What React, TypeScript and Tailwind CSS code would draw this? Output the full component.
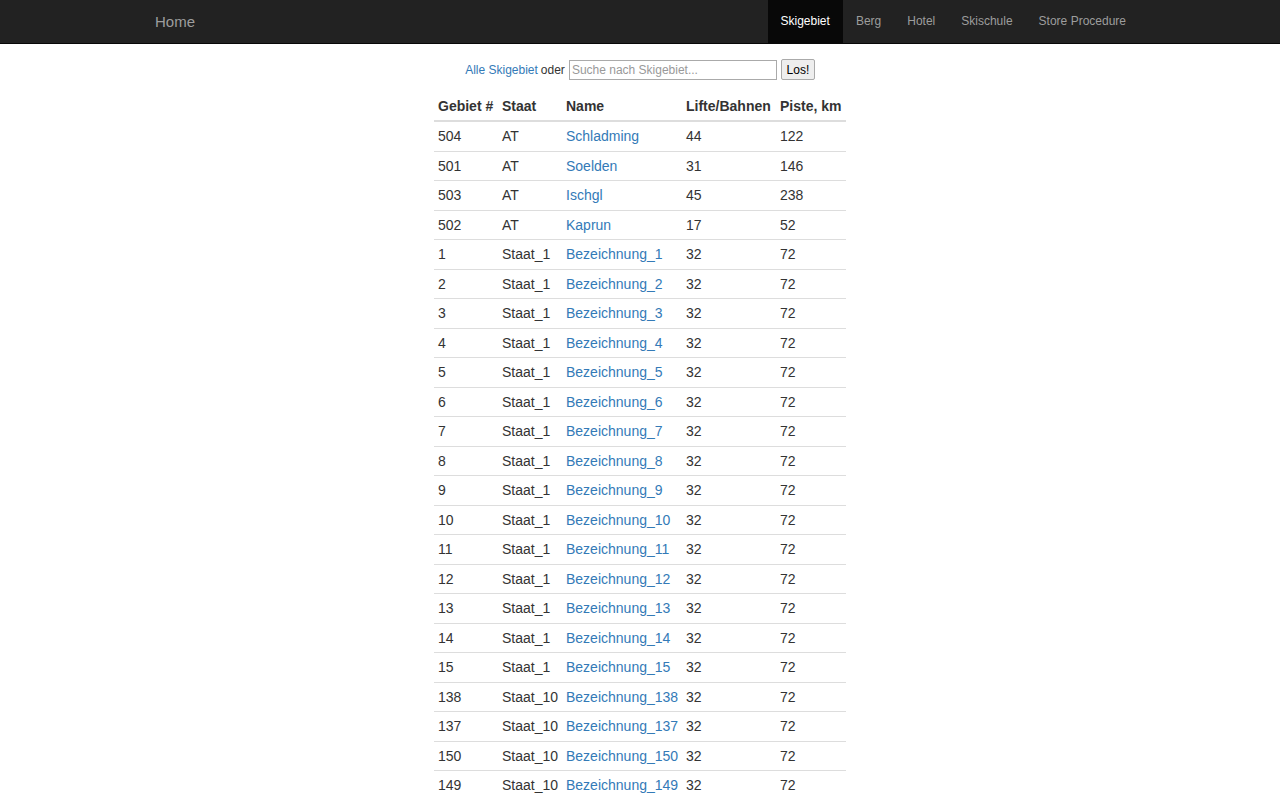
import React from "react";

type Row = { id: string; staat: string; name: string; lifte: string; piste: string };

const rows: Row[] = [
  { id: "504", staat: "AT", name: "Schladming", lifte: "44", piste: "122" },
  { id: "501", staat: "AT", name: "Soelden", lifte: "31", piste: "146" },
  { id: "503", staat: "AT", name: "Ischgl", lifte: "45", piste: "238" },
  { id: "502", staat: "AT", name: "Kaprun", lifte: "17", piste: "52" },
  ...Array.from({ length: 15 }, (_, i) => ({
    id: String(i + 1),
    staat: "Staat_1",
    name: `Bezeichnung_${i + 1}`,
    lifte: "32",
    piste: "72",
  })),
  ...["138", "137", "150", "149"].map((n) => ({
    id: n,
    staat: "Staat_10",
    name: `Bezeichnung_${n}`,
    lifte: "32",
    piste: "72",
  })),
];

const navItems = ["Skigebiet", "Berg", "Hotel", "Skischule", "Store Procedure"];

const App = () => {
  return (
    <div className="min-h-screen bg-white font-['Liberation_Sans',Arial,sans-serif] text-[14px] text-[#333]">
      <nav className="h-[44px] border-b border-[#080808] bg-[#222]">
        <div className="mx-auto flex h-[43px] w-[970px] items-center justify-between">
          <a className="mt-[1px] text-[15px] text-[#9d9d9d]">Home</a>
          <ul className="mr-[-14px] flex h-full">
            {navItems.map((item, i) => (
              <li key={item}>
                <a
                  className={
                    i === 0
                      ? "flex h-[43px] items-center bg-[#080808] px-[13px] pb-[1px] text-[12px] text-white"
                      : "flex h-[43px] items-center px-[13px] pb-[1px] text-[12px] text-[#9d9d9d]"
                  }
                >
                  {item}
                </a>
              </li>
            ))}
          </ul>
        </div>
      </nav>

      <div className="mt-[15px] flex items-center justify-center text-[12px]">
        <a className="text-[#337ab7]">Alle Skigebiet</a>
        <span className="ml-[3px]">oder</span>
        <input
          className="ml-[4px] h-[20px] w-[208px] border border-[#aaa] px-[2px] text-[12px] placeholder:text-[#999]"
          placeholder="Suche nach Skigebiet..."
        />
        <button className="ml-[4px] h-[21px] w-[34px] rounded-[2px] border border-[#aaa] bg-[#eee] text-[12px] text-[#000]">
          Los!
        </button>
      </div>

      <table className="mx-auto mt-[12px] w-[412px] table-fixed border-collapse">
        <thead>
          <tr className="border-b-2 border-[#ddd] text-left font-bold">
            <th className="w-[64px] px-[4px] py-[4px] leading-[20px]">Gebiet #</th>
            <th className="w-[64px] px-[4px] py-[4px] leading-[20px]">Staat</th>
            <th className="w-[120px] px-[4px] py-[4px] leading-[20px]">Name</th>
            <th className="w-[94px] px-[4px] py-[4px] leading-[20px]">Lifte/Bahnen</th>
            <th className="w-[70px] px-[4px] py-[4px] leading-[20px]">Piste, km</th>
          </tr>
        </thead>
        <tbody>
          {rows.map((r) => (
            <tr key={r.id} className="border-b border-[#ddd]">
              <td className="px-[4px] py-[4px] leading-[20.5px]">{r.id}</td>
              <td className="px-[4px] py-[4px] leading-[20.5px]">{r.staat}</td>
              <td className="px-[4px] py-[4px] leading-[20.5px] text-[#337ab7]">{r.name}</td>
              <td className="px-[4px] py-[4px] leading-[20.5px]">{r.lifte}</td>
              <td className="px-[4px] py-[4px] leading-[20.5px]">{r.piste}</td>
            </tr>
          ))}
        </tbody>
      </table>
    </div>
  );
};

export default App;
